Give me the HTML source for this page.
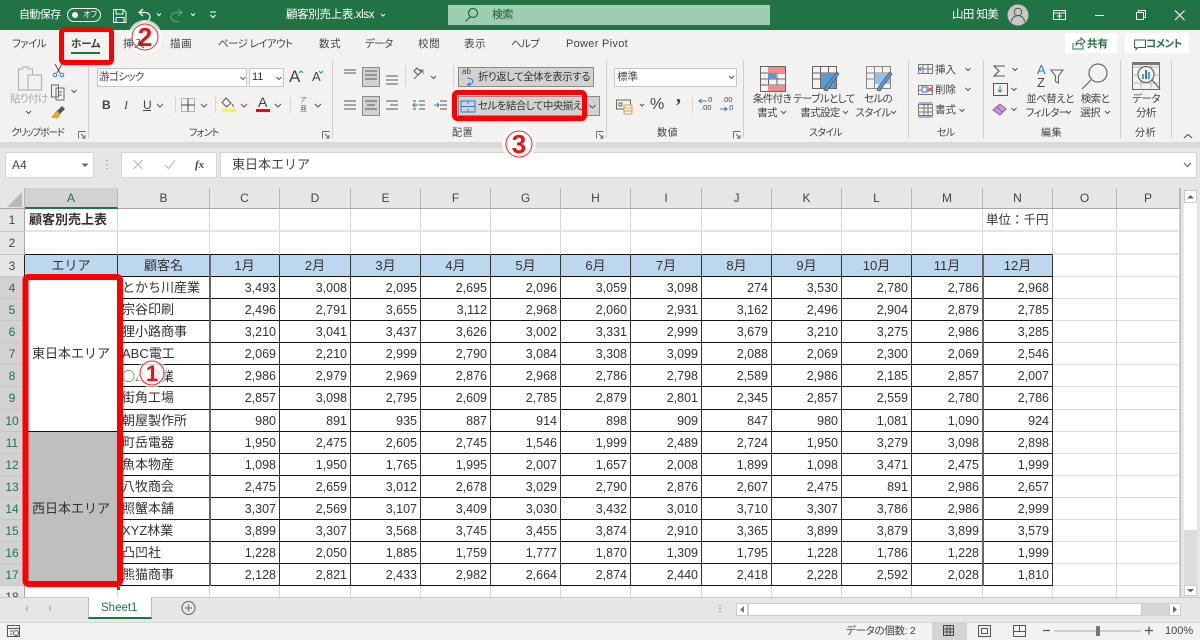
<!DOCTYPE html>
<html lang="ja"><head><meta charset="utf-8"><title>顧客別売上表</title>
<style>
*{box-sizing:border-box}
html,body{margin:0;padding:0;width:1200px;height:640px;overflow:hidden;background:#e6e6e6;font-family:"Liberation Sans","Noto Sans CJK JP",sans-serif}
.r{position:absolute}
.t{position:absolute;white-space:nowrap;font-size:10.5px;letter-spacing:-.6px;line-height:14px;color:#444;font-feature-settings:"palt";font-family:"Liberation Sans","Noto Sans CJK JP",sans-serif}
.g{font-size:10px;letter-spacing:-.8px}
.p{letter-spacing:.6px}
.w{color:#fff}.cx{transform:translateX(-50%)}
table{position:absolute;left:0;top:188px;border-collapse:separate;border-spacing:0;table-layout:fixed;width:1180px;font-size:12.5px;color:#333}
th,td{padding:0;font-weight:normal;overflow:hidden;white-space:nowrap;line-height:16px}
thead th{background:#e6e6e6;color:#444;font-size:12px;border-right:1px solid #b8b8b8;border-bottom:1px solid #a8a8a8}
tbody th{background:#e6e6e6;color:#444;font-size:12px;border-bottom:1px solid #c6c6c6;border-right:1px solid #a8a8a8}
th.s{background:#d2d2d2;color:#217346}
tbody th.n{border-right:1px solid #222}
td{background:#fff;border-right:1px solid #d6d6d6;border-bottom:1px solid #dcdcdc}
.b td{border-right:1px solid #333;border-bottom:1px solid #111;text-align:right;padding-right:3px}
.b td.l{text-align:left;padding-left:4px;padding-right:0;font-size:13px}
.b td.a{text-align:center;padding:0;font-size:13px}
.b td.x{border-right:1px solid #d6d6d6;border-bottom:1px solid #dcdcdc;padding:0}
.h td{background:#bdd7ee;text-align:center;padding:0;font-size:13px}
.h td.x{background:#fff}
.k{border-bottom:1px solid #111}
.t1 td{border-bottom:2px solid #e4e4e4}
.t2 td{border-bottom:2px solid #e4e4e4}
.t2 td.k{border-bottom:1px solid #111}
</style></head><body>

<!-- title bar -->
<div class="r" style="left:0;top:0;width:1200px;height:30px;background:#217346"></div>
<div class="r" style="left:448px;top:5px;width:322px;height:20px;background:#9fcdb3"></div>
<!-- ribbon -->
<div class="r" style="left:0;top:30px;width:1200px;height:112px;background:#f3f2f1"></div>
<div class="r" style="left:0;top:142px;width:1200px;height:6px;background:#d9d9d9"></div>
<!-- formula bar -->
<div class="r" style="left:5px;top:152px;width:89px;height:26px;background:#fff;border:1px solid #d4d4d4"></div>
<div class="r" style="left:121px;top:152px;width:96px;height:26px;background:#fff;border:1px solid #d4d4d4"></div>
<div class="r" style="left:220px;top:152px;width:977px;height:26px;background:#fff;border:1px solid #d4d4d4"></div>

<!-- ribbon boxes -->
<div class="r" style="left:97px;top:68px;width:150px;height:19px;background:#fff;border:1px solid #c8c6c4"></div>
<div class="r" style="left:249px;top:68px;width:35px;height:19px;background:#fff;border:1px solid #c8c6c4"></div>
<div class="r" style="left:614px;top:68px;width:123px;height:19px;background:#fff;border:1px solid #c8c6c4"></div>
<div class="r" style="left:362px;top:67px;width:18px;height:20px;background:#d2d2d2;border:1px solid #8a8a8a"></div>
<div class="r" style="left:362px;top:96px;width:18px;height:20px;background:#d2d2d2;border:1px solid #8a8a8a"></div>
<div class="r" style="left:458px;top:67px;width:136px;height:20px;background:#d2d2d2;border:1px solid #8a8a8a"></div>
<div class="r" style="left:458px;top:96px;width:142px;height:20px;background:#d2d2d2;border:1px solid #8a8a8a"></div>
<div class="r" style="left:1065px;top:33px;width:52px;height:20px;background:#fff"></div>
<div class="r" style="left:1125px;top:33px;width:64px;height:20px;background:#fff"></div>

<!-- sheet -->
<table>
<colgroup><col style="width:25px"><col style="width:93px"><col style="width:92px"><col style="width:70px"><col style="width:71px"><col style="width:70px"><col style="width:70px"><col style="width:70px"><col style="width:70px"><col style="width:71px"><col style="width:70px"><col style="width:70px"><col style="width:70px"><col style="width:71px"><col style="width:70px"><col style="width:64px"><col style="width:63px"></colgroup>
<thead><tr style="height:21px"><th></th><th class="s" style="border-bottom:2px solid #217346">A</th><th>B</th><th>C</th><th>D</th><th>E</th><th>F</th><th>G</th><th>H</th><th>I</th><th>J</th><th>K</th><th>L</th><th>M</th><th>N</th><th>O</th><th>P</th></tr></thead>
<tbody>
<tr class="t1" style="height:23px"><th>1</th><td style="font-weight:bold;font-size:13px;padding-left:4px">顧客別売上表</td><td></td><td></td><td></td><td></td><td></td><td></td><td></td><td></td><td></td><td></td><td></td><td></td><td style="font-size:12.5px;padding-left:3px">単位：千円</td><td></td><td></td></tr>
<tr class="t2" style="height:23px"><th>2</th><td class="k"></td><td class="k"></td><td class="k"></td><td class="k"></td><td class="k"></td><td class="k"></td><td class="k"></td><td class="k"></td><td class="k"></td><td class="k"></td><td class="k"></td><td class="k"></td><td class="k"></td><td class="k"></td><td></td><td></td></tr>
<tr class="b h" style="height:22px"><th class="n">3</th><td>エリア</td><td>顧客名</td><td>1月</td><td>2月</td><td>3月</td><td>4月</td><td>5月</td><td>6月</td><td>7月</td><td>8月</td><td>9月</td><td>10月</td><td>11月</td><td>12月</td><td class="x"></td><td class="x"></td></tr>
<tr class="b" style="height:22px"><th class="s n">4</th><td class="a" rowspan="7">東日本エリア</td><td class="l">とかち川産業</td><td>3,493</td><td>3,008</td><td>2,095</td><td>2,695</td><td>2,096</td><td>3,059</td><td>3,098</td><td>274</td><td>3,530</td><td>2,780</td><td>2,786</td><td>2,968</td><td class="x"></td><td class="x"></td></tr>
<tr class="b" style="height:22px"><th class="s n">5</th><td class="l">宗谷印刷</td><td>2,496</td><td>2,791</td><td>3,655</td><td>3,112</td><td>2,968</td><td>2,060</td><td>2,931</td><td>3,162</td><td>2,496</td><td>2,904</td><td>2,879</td><td>2,785</td><td class="x"></td><td class="x"></td></tr>
<tr class="b" style="height:22px"><th class="s n">6</th><td class="l">狸小路商事</td><td>3,210</td><td>3,041</td><td>3,437</td><td>3,626</td><td>3,002</td><td>3,331</td><td>2,999</td><td>3,679</td><td>3,210</td><td>3,275</td><td>2,986</td><td>3,285</td><td class="x"></td><td class="x"></td></tr>
<tr class="b" style="height:22px"><th class="s n">7</th><td class="l">ABC電工</td><td>2,069</td><td>2,210</td><td>2,999</td><td>2,790</td><td>3,084</td><td>3,308</td><td>3,099</td><td>2,088</td><td>2,069</td><td>2,300</td><td>2,069</td><td>2,546</td><td class="x"></td><td class="x"></td></tr>
<tr class="b" style="height:22px"><th class="s n">8</th><td class="l" style="font-family:'Noto Sans CJK JP',sans-serif">○△興業</td><td>2,986</td><td>2,979</td><td>2,969</td><td>2,876</td><td>2,968</td><td>2,786</td><td>2,798</td><td>2,589</td><td>2,986</td><td>2,185</td><td>2,857</td><td>2,007</td><td class="x"></td><td class="x"></td></tr>
<tr class="b" style="height:23px"><th class="s n">9</th><td class="l">街角工場</td><td>2,857</td><td>3,098</td><td>2,795</td><td>2,609</td><td>2,785</td><td>2,879</td><td>2,801</td><td>2,345</td><td>2,857</td><td>2,559</td><td>2,780</td><td>2,786</td><td class="x"></td><td class="x"></td></tr>
<tr class="b" style="height:22px"><th class="s n">10</th><td class="l">朝屋製作所</td><td>980</td><td>891</td><td>935</td><td>887</td><td>914</td><td>898</td><td>909</td><td>847</td><td>980</td><td>1,081</td><td>1,090</td><td>924</td><td class="x"></td><td class="x"></td></tr>
<tr class="b" style="height:22px"><th class="s n">11</th><td class="a" rowspan="7" style="background:#bfbfbf">西日本エリア</td><td class="l">町岳電器</td><td>1,950</td><td>2,475</td><td>2,605</td><td>2,745</td><td>1,546</td><td>1,999</td><td>2,489</td><td>2,724</td><td>1,950</td><td>3,279</td><td>3,098</td><td>2,898</td><td class="x"></td><td class="x"></td></tr>
<tr class="b" style="height:22px"><th class="s n">12</th><td class="l">魚本物産</td><td>1,098</td><td>1,950</td><td>1,765</td><td>1,995</td><td>2,007</td><td>1,657</td><td>2,008</td><td>1,899</td><td>1,098</td><td>3,471</td><td>2,475</td><td>1,999</td><td class="x"></td><td class="x"></td></tr>
<tr class="b" style="height:22px"><th class="s n">13</th><td class="l">八牧商会</td><td>2,475</td><td>2,659</td><td>3,012</td><td>2,678</td><td>3,029</td><td>2,790</td><td>2,876</td><td>2,607</td><td>2,475</td><td>891</td><td>2,986</td><td>2,657</td><td class="x"></td><td class="x"></td></tr>
<tr class="b" style="height:22px"><th class="s n">14</th><td class="l">照蟹本舗</td><td>3,307</td><td>2,569</td><td>3,107</td><td>3,409</td><td>3,030</td><td>3,432</td><td>3,010</td><td>3,710</td><td>3,307</td><td>3,786</td><td>2,986</td><td>2,999</td><td class="x"></td><td class="x"></td></tr>
<tr class="b" style="height:22px"><th class="s n">15</th><td class="l">XYZ林業</td><td>3,899</td><td>3,307</td><td>3,568</td><td>3,745</td><td>3,455</td><td>3,874</td><td>2,910</td><td>3,365</td><td>3,899</td><td>3,879</td><td>3,899</td><td>3,579</td><td class="x"></td><td class="x"></td></tr>
<tr class="b" style="height:22px"><th class="s n">16</th><td class="l">凸凹社</td><td>1,228</td><td>2,050</td><td>1,885</td><td>1,759</td><td>1,777</td><td>1,870</td><td>1,309</td><td>1,795</td><td>1,228</td><td>1,786</td><td>1,228</td><td>1,999</td><td class="x"></td><td class="x"></td></tr>
<tr class="b" style="height:22px"><th class="s n">17</th><td class="l">熊猫商事</td><td>2,128</td><td>2,821</td><td>2,433</td><td>2,982</td><td>2,664</td><td>2,874</td><td>2,440</td><td>2,418</td><td>2,228</td><td>2,592</td><td>2,028</td><td>1,810</td><td class="x"></td><td class="x"></td></tr>
<tr style="height:22px"><th>18</th><td></td><td></td><td></td><td></td><td></td><td></td><td></td><td></td><td></td><td></td><td></td><td></td><td></td><td></td><td></td><td></td></tr>
</tbody></table>

<!-- sheet right side / scrollbars -->
<div class="r" style="left:1180px;top:188px;width:20px;height:409px;background:#e6e6e6;border-left:1px solid #bbb"></div>
<div class="r" style="left:1184px;top:203px;width:13px;height:382px;background:#fff"></div>
<div class="r" style="left:1184px;top:190px;width:13px;height:13px;background:#fff;border:1px solid #ccc"></div>
<div class="r" style="left:1184px;top:530px;width:13px;height:55px;background:#dcdcdc"></div>
<div class="r" style="left:1184px;top:585px;width:13px;height:11px;background:#fff;border:1px solid #ccc"></div>

<!-- tab bar + status bar -->
<div class="r" style="left:0;top:597px;width:1200px;height:25px;background:#e6e6e6;border-top:1px solid #c8c8c8"></div>
<div class="r" style="left:88px;top:597px;width:64px;height:22px;background:#fff;border-left:1px solid #bbb;border-right:1px solid #bbb;border-bottom:2px solid #217346"></div>
<div class="r" style="left:748px;top:603px;width:394px;height:13px;background:#fff;border:1px solid #ccc"></div>
<div class="r" style="left:1142px;top:603px;width:27px;height:13px;background:#d6d6d6"></div>
<div class="r" style="left:1169px;top:603px;width:12px;height:13px;background:#fff;border:1px solid #ccc"></div>
<div class="r" style="left:736px;top:603px;width:12px;height:13px;background:#fff;border:1px solid #ccc"></div>
<div class="r" style="left:0;top:622px;width:1200px;height:18px;background:#f3f2f1;border-top:1px solid #d8d8d8"></div>
<div class="r" style="left:932px;top:622px;width:35px;height:18px;background:#d4d4d4"></div>

<!-- all icons, page coordinates -->
<svg class="r" style="left:0;top:0" width="1200" height="640" viewBox="0 0 1200 640" fill="none">
<!-- heavier column rules -->
<rect x="209" y="255" width="2" height="331" fill="#666"/><rect x="982" y="255" width="2" height="331" fill="#666"/>
<!-- title bar -->
<rect x="67.500" y="8.500" width="33" height="13" rx="6.500" stroke="#fff"/><circle cx="75" cy="15" r="3" fill="#fff"/>
<path d="M113.500 9.500h10l2.500 2.500v10.500h-12.500zM116 9.500v4.500h7v-4.500M116 22.500v-5h8v5" stroke="#fff"/>
<path d="M143 9l-4 3.500 4 3.500M139 12.500h6.500a4.500 4.500 0 0 1 0 9H142" stroke="#fff" stroke-width="1.200"/>
<path d="M178 9l4 3.500-4 3.500M182 12.500h-6.500a4.500 4.500 0 0 0 0 9H179" stroke="#5f9d7d" stroke-width="1.200"/>
<path d="M157 13.500l2 2 2-2M191 13.500l2 2 2-2" stroke="#fff" stroke-width="1"/>
<path d="M210 12h6M210.500 15l2.500 2.500 2.500-2.500" stroke="#fff"/>
<path d="M381 14l2 2 2-2" stroke="#fff"/>
<circle cx="473" cy="13" r="4.500" stroke="#1d6b40" stroke-width="1.200"/><path d="M470 17l-4.500 4.500" stroke="#1d6b40" stroke-width="1.200"/>
<circle cx="1018" cy="15" r="10.500" fill="#c9c7c5"/><circle cx="1018" cy="12" r="3.800" stroke="#555"/><path d="M1011.500 22a6.500 6.500 0 0 1 13 0" stroke="#555"/>
<path d="M1053.500 10.500h12v9h-12zM1053.500 13h12M1059.500 13v6.500M1057 16h5" stroke="#fff"/>
<path d="M1095 15.500h9" stroke="#fff"/>
<path d="M1136.500 12.500h7v7h-7zM1138.500 12.500v-2h7v7h-2" stroke="#fff"/>
<path d="M1175 10.500l9.500 9.500M1184.500 10.500l-9.500 9.500" stroke="#fff" stroke-width="1.100"/>
<!-- share / comment -->
<path d="M1073 43v6h10v-4M1076 45c0-3 2-5 5-5v-2l4 3.500-4 3.500v-2c-2 0-4 .5-5 2z" stroke="#217346"/>
<path d="M1134.500 40h11v7.500h-7.500l-2 2v-2h-1.500z" stroke="#217346"/>
<!-- ホーム underline -->
<rect x="71" y="52" width="29" height="2" fill="#217346"/>
<!-- group separators -->
<path d="M88.500 60v78M332.500 60v78M606.500 60v78M743.500 60v78M908.500 60v78M983.500 60v78M1120.500 60v78M1171.500 60v78" stroke="#d2d0ce"/>
<path d="M405.500 65v22M453.500 65v22M175.500 97v16M215.500 97v16M290.500 97v16M692.500 97v16" stroke="#d8d6d4"/>
<!-- clipboard -->
<path d="M18.500 69h4v-2h6v2h4v21h-14z" stroke="#b5b5b5" stroke-width="1.200" fill="#f3f2f1"/><rect x="28" y="75" width="13.500" height="15" fill="#f3f2f1" stroke="#b5b5b5" stroke-width="1.200"/>
<path d="M55 64l5 9M62 64l-5 9" stroke="#555"/><circle cx="55" cy="75" r="1.800" stroke="#2b7cd3"/><circle cx="62" cy="75" r="1.800" stroke="#2b7cd3"/>
<path d="M51.500 85h7v12h-7zM56 88h8v12h-8zM58 92h4M58 95h4" stroke="#666" fill="#f3f2f1"/>
<path d="M62 106l3 3-5 5-3-3z" fill="#555"/><path d="M57 111l3 3-3 4-5-1z" fill="#f5a623" stroke="#c47b12" stroke-width=".6"/>
<!-- font -->
<path d="M240.500 77l2.500 2.500 2.500-2.500M276.500 77l2.500 2.500 2.500-2.500M157 104l3 3 3-3M201 104l3 3 3-3M241 104l3 3 3-3M275 104l3 3 3-3M315 104l3 3 3-3M71.500 90l2.500 2.500 2.500-2.500M26 111l2.500 2.500 2.500-2.500" stroke="#555"/>
<path d="M299 73l2-2 2 2" stroke="#2b7cd3"/><path d="M319 71l2 2 2-2" stroke="#2b7cd3"/>
<path d="M181.500 98.500h13v13h-13z" stroke="#777" stroke-dasharray="1 1"/><path d="M188 98.500v13M181.500 105h13" stroke="#444"/>
<path d="M226 98l5 5-4.500 4-4.500-4.500zM232 104c1 1.500 1.500 2.500 1.500 3" stroke="#555" fill="#f3f2f1"/><rect x="222" y="109" width="14" height="3" fill="#ffff00"/>
<rect x="256" y="109" width="14" height="3" fill="#ff0000"/>
<!-- alignment -->
<path d="M344 70h12M344 73h12M365 71h12M365 75h12M365 79h12M386 76h12M386 80h12M386 84h12M344 101h12M344 105h12M344 109h12M365 101h12M367 105h8M365 109h12M386 101h12M390 105h8M386 109h12" stroke="#555"/>
<path d="M414 79l9-9M423 70v4M423 70h-4" stroke="#2b7cd3"/><path d="M414 71l3-3 4 4-3 3z" stroke="#555"/>
<path d="M431 76l2.500 2.500 2.500-2.500M589.500 105l3 3 3-3M640 104l2 2 2-2" stroke="#555"/>
<path d="M413 101h3M413 109h3M419 101h6M419 105h6M419 109h6" stroke="#555"/><path d="M418 105h-5M415 103l-2 2 2 2" stroke="#2b7cd3"/>
<path d="M440 101h7M440 105h7M440 109h7" stroke="#555"/><path d="M434 105h5M437 103l2 2-2 2" stroke="#2b7cd3"/>
<path d="M461 101h14v11h-14zM461 106.500h14M468 101v3M468 109v3" stroke="#2b7cd3"/>
<path d="M467 78c4 0 6 2 6 3.500s-2 3-5 3M470 82.500l-2.500 2 2.500 2" stroke="#2b7cd3"/>
<!-- number -->
<path d="M729 76l2.500 2.500 2.500-2.500" stroke="#555"/>
<path d="M616.500 100h14v9h-14z" stroke="#666"/><path d="M619 103h3v3h-3z" stroke="#666"/><rect x="624" y="105" width="8" height="9" rx="1.500" fill="#fff" stroke="#e8962d"/><path d="M624 108h8M624 111h8" stroke="#e8962d"/>
<path d="M699 101h7M701.500 99l-2.500 2 2.500 2" stroke="#2b7cd3"/><path d="M720 109h7M724.500 107l2.500 2-2.500 2" stroke="#2b7cd3"/>
<!-- conditional format -->
<path d="M760.500 66.500h25v25h-25zM760.500 73h25M760.500 79h25M760.500 85h25M768.500 66.500v25M777 66.500v25" stroke="#666"/>
<rect x="768" y="67" width="9" height="6" fill="#f28b8b"/><rect x="777" y="67" width="8" height="6" fill="#f28b8b"/><rect x="768" y="73" width="8" height="6" fill="#5b9bd5"/><rect x="768" y="85" width="17" height="6" fill="#f28b8b"/>
<path d="M812.500 66.500h24v22h-24zM812.500 73h24M812.500 79h24M820.500 66.500v22M828.500 66.500v22" stroke="#666"/>
<rect x="821" y="73" width="15" height="15" fill="#5b9bd5"/>
<path d="M839 74l-9 12-3 5-3-1 2-4 11-14z" fill="#5b9bd5" stroke="#555" stroke-width=".8"/>
<path d="M866.500 66.500h24v22h-24zM866.500 73h24M866.500 79h24M874.500 66.500v22M882.500 66.500v22" stroke="#888"/>
<rect x="875" y="73" width="15" height="11" fill="#8fc1ee"/>
<path d="M892 74l-9 12-3 5-3-1 2-4 11-14z" fill="#5b9bd5" stroke="#555" stroke-width=".8"/>
<path d="M781 111l2.500 2.500 2.500-2.500M843 111l2.500 2.500 2.500-2.500M891 111l2.500 2.500 2.500-2.500M965.500 68l2.500 2.500 2.500-2.500M965.500 88l2.500 2.500 2.500-2.500M959.500 109l2.500 2.500 2.500-2.500M1012.500 68l2.500 2.500 2.500-2.500M1011.500 88l2.500 2.500 2.500-2.500M1011.500 108l2.500 2.500 2.500-2.500M1066 111l2.500 2.500 2.500-2.500M1105 111l2.500 2.500 2.500-2.500" stroke="#555"/>
<!-- cells -->
<path d="M918.500 64.500h14v9h-14zM918.500 69h14M923 64.500v9M928 64.500v9" stroke="#777"/><path d="M926 69h-7M921 67l-2 2 2 2" stroke="#2b7cd3"/>
<path d="M918.500 85.500h14v9h-14zM918.500 90h14" stroke="#777"/><rect x="922" y="87" width="5" height="5" fill="#f3f2f1" stroke="#2b7cd3"/><path d="M928 87.500l4 4M932 87.500l-4 4" stroke="#e23b3b"/>
<path d="M918.500 104.500h14v11h-14zM918.500 108h14M918.500 112h14M924 104.500v11M928 104.500v11" stroke="#777"/><path d="M918.500 103h14M918.500 117h14" stroke="#2b7cd3"/>
<!-- editing -->
<path d="M1005 66h-11l5 5-5 5h11" stroke="#555" stroke-width="1.100"/>
<path d="M993.500 83.500h14v12h-14z" stroke="#555"/><path d="M1000 86v6M998 90l2 2 2-2" stroke="#2b7cd3"/>
<path d="M993 110l7-6 6 5-6 6z" fill="#c89ad6" stroke="#8b5aa3"/><path d="M996.500 107l6 5" stroke="#8b5aa3"/>
<path d="M1051 70h12l-4.500 6v7l-3-1.500v-5.500z" stroke="#666" stroke-width="1.100"/>
<circle cx="1098" cy="73" r="9" stroke="#666" stroke-width="1.200"/><path d="M1091 80l-9 9" stroke="#666" stroke-width="1.200"/>
<!-- analysis -->
<rect x="1132.500" y="62.500" width="27" height="27" stroke="#666"/><path d="M1132.500 67h27M1132.500 75h27M1132.500 83h27M1141 62.500v27M1151 62.500v27" stroke="#bbb"/>
<rect x="1132" y="62" width="28" height="3" fill="#777"/>
<circle cx="1146" cy="74.500" r="8" fill="#f3f2f1" stroke="#666" stroke-width="1.200"/><path d="M1152 80l8 9" stroke="#666" stroke-width="1.300"/>
<rect x="1142" y="74" width="2" height="5" fill="#5b9bd5"/><rect x="1145" y="70" width="2" height="9" fill="#2b7cd3"/><rect x="1148" y="72" width="2" height="7" fill="#5b9bd5"/>
<path d="M1184 138l4-3.500 4 3.500" stroke="#444"/>
<!-- launchers -->
<path d="M78.500 131.500h7M78.500 131.500v7M81 134l4 4M85 135v3h-3M322.500 131.500h7M322.500 131.500v7M325 134l4 4M329 135v3h-3M596.500 131.500h7M596.500 131.500v7M599 134l4 4M603 135v3h-3M733.500 131.500h7M733.500 131.500v7M736 134l4 4M740 135v3h-3" stroke="#666" stroke-width=".9"/>
<!-- formula bar -->
<path d="M81.500 163.500h7l-3.500 3.500z" fill="#666"/>
<path d="M107 160v1M107 164v1M107 168v1" stroke="#999" stroke-width="1.500"/>
<path d="M133.500 160l9 9M142.500 160l-9 9" stroke="#c2c2c2" stroke-width="1.300"/>
<path d="M165 165l3.500 3.500 6.500-8" stroke="#c2c2c2" stroke-width="1.300"/>
<path d="M1184 163l3.500 3.500 3.500-3.500" stroke="#666" stroke-width="1.200"/>
<!-- corner triangle -->
<path d="M22 192v15h-15z" fill="#b8b8b8"/>
<path d="M1187 198.500l3.500-3.500 3.500 3.500zM1187 589l3.500 3.500 3.500-3.500z" fill="#666"/>
<!-- selection handle -->
<rect x="117" y="587" width="3" height="3" fill="#217346"/>
<!-- tab bar icons -->
<path d="M28 605l-3 3.500 3 3.500zM49 605l3 3.500-3 3.500z" fill="#c0c0c0"/>
<circle cx="188.500" cy="608" r="6.500" stroke="#777" stroke-width="1.200"/><path d="M185 608h7M188.500 604.500v7" stroke="#777" stroke-width="1.200"/>
<path d="M720 605v1M720 608v1M720 611v1" stroke="#999" stroke-width="1.500"/>
<path d="M744 606l-4 3.500 4 3.500z" fill="#777"/><path d="M1173 606l4 3.500-4 3.500z" fill="#666"/>
<!-- status bar -->
<path d="M7.500 625.500h12v11h-12zM7.500 628.500h12M10 631h3M10 634h2" stroke="#555"/><circle cx="16" cy="633" r="2.500" fill="#f3f2f1" stroke="#555"/>
<path d="M943.500 625.500h10v10h-10zM943.500 629h10M943.500 632h10M947 625.500v10M950 625.500v10" stroke="#444"/>
<path d="M978.500 625.500h12v11h-12zM981.500 628.500h6v5h-6z" stroke="#555"/>
<path d="M1013.500 625.500h12v11h-12zM1019.500 625.500v6h-6M1019.500 631.500h6" stroke="#555"/>
<path d="M1043 630.500h7M1145 630.500h8M1149 626.500v8" stroke="#555" stroke-width="1.200"/>
<path d="M1054 631h87" stroke="#aaa"/><rect x="1096" y="626" width="4" height="10" fill="#777"/>
<!-- annotation frames -->
<rect x="61.500" y="29.500" width="50" height="33" rx="3" stroke="#ff0000" stroke-width="5"/>
<rect x="454.500" y="92.500" width="130" height="26" rx="3" stroke="#ff0000" stroke-width="5"/>
<rect x="25.500" y="277" width="94.500" height="307" rx="3" stroke="#ff0000" stroke-width="6"/>
<!-- numbered badges -->
<circle cx="145" cy="37" r="17" fill="#fff" opacity=".75"/><circle cx="145" cy="37" r="14.500" fill="#fff" opacity=".9"/><circle cx="145" cy="37" r="13" stroke="#ff2020" stroke-width="1" fill="#fff"/>
<circle cx="152" cy="373" r="15" fill="#fff" opacity=".6"/><circle cx="152" cy="373" r="12" stroke="#ff2020" fill="#fff" fill-opacity=".55"/>
<circle cx="519" cy="144" r="17" fill="#fff" opacity=".75"/><circle cx="519" cy="144" r="13" stroke="#ff2020" fill="#fff"/>
<text x="145" y="46" text-anchor="middle" font-family="Liberation Sans" font-weight="bold" font-size="26" fill="#f01010">2</text>
<text x="152" y="381" text-anchor="middle" font-family="Liberation Sans" font-weight="bold" font-size="22" fill="#f01010">1</text>
<text x="519" y="153" text-anchor="middle" font-family="Liberation Sans" font-weight="bold" font-size="26" fill="#f01010">3</text>
</svg>

<!-- title text -->
<span class="t w" style="left:19px;top:8px;font-size:11px">自動保存</span>
<span class="t w" style="left:83px;top:9px;font-size:8px;line-height:12px;letter-spacing:0">オフ</span>
<span class="t w" style="left:286px;top:8px;font-size:11.5px;letter-spacing:-.35px">顧客別売上表.xlsx</span>
<span class="t" style="left:492px;top:8px;color:#1d5c3a;font-size:11px">検索</span>
<span class="t w" style="left:952px;top:8px;font-size:11.5px">山田 知美</span>
<!-- tabs -->
<span class="t" style="left:12px;top:37px">ファイル</span>
<span class="t" style="left:71px;top:37px;font-weight:bold;color:#2d4a3a;letter-spacing:-.2px">ホーム</span>
<span class="t p" style="left:123px;top:37px">挿入</span>
<span class="t p" style="left:170px;top:37px">描画</span>
<span class="t" style="left:218px;top:37px">ページ レイアウト</span>
<span class="t p" style="left:319px;top:37px">数式</span>
<span class="t" style="left:365px;top:37px">データ</span>
<span class="t p" style="left:418px;top:37px">校閲</span>
<span class="t p" style="left:464px;top:37px">表示</span>
<span class="t" style="left:511px;top:37px">ヘルプ</span>
<span class="t" style="left:566px;top:37px;font-size:11px;letter-spacing:.3px">Power Pivot</span>
<span class="t" style="left:1087px;top:37px;font-weight:bold;color:#217346;letter-spacing:0">共有</span>
<span class="t" style="left:1146px;top:37px;font-weight:bold;color:#217346">コメント</span>
<!-- clipboard -->
<span class="t" style="left:10px;top:92px;color:#a8a8a8">貼り付け</span>
<span class="t g" style="left:11px;top:127px;letter-spacing:-1.3px">クリップボード</span>
<!-- font -->
<span class="t" style="left:99px;top:70px">游ゴシック</span>
<span class="t" style="left:252px;top:70px;font-size:11px;color:#333;letter-spacing:0">11</span>
<span class="t" style="left:289px;top:68px;font-size:17px;line-height:18px">A</span>
<span class="t" style="left:312px;top:70px;font-size:13px">A</span>
<span class="t" style="left:102px;top:98px;font-weight:bold;font-size:12px">B</span>
<span class="t" style="left:124px;top:98px;font-style:italic;font-size:12px;font-family:'Liberation Serif',serif">I</span>
<span class="t" style="left:143px;top:98px;font-size:12px;text-decoration:underline">U</span>
<span class="t" style="left:258px;top:95px;font-size:14px">A</span>
<span class="t" style="left:300px;top:96px;font-size:7px;line-height:9px;color:#666;letter-spacing:0">ア<br>亜</span>
<span class="t g" style="left:189px;top:127px">フォント</span>
<!-- alignment -->
<span class="t" style="left:462px;top:67px;font-size:8px;line-height:10px;letter-spacing:0">ab</span>
<span class="t" style="left:478px;top:70px;color:#333;letter-spacing:-.55px">折り返して全体を表示する</span>
<span class="t" style="left:478px;top:99px;color:#333;letter-spacing:-.55px">セルを結合して中央揃え</span>
<span class="t p" style="left:452px;top:127px;font-size:10px">配置</span>
<!-- number -->
<span class="t" style="left:617px;top:70px;letter-spacing:0">標準</span>
<span class="t" style="left:650px;top:96px;font-size:16px;line-height:18px">%</span>
<span class="t" style="left:676px;top:87px;font-size:20px;line-height:18px;font-weight:bold;font-family:'Liberation Serif',serif">,</span>
<span class="t" style="left:706px;top:96px;font-size:7.5px;line-height:8px;letter-spacing:0">.0</span>
<span class="t" style="left:701px;top:104px;font-size:7.5px;line-height:8px;letter-spacing:0">.00</span>
<span class="t" style="left:722px;top:96px;font-size:7.5px;line-height:8px;letter-spacing:0">.00</span>
<span class="t" style="left:727px;top:104px;font-size:7.5px;line-height:8px;letter-spacing:0">.0</span>
<span class="t p" style="left:657px;top:127px;font-size:10px">数値</span>
<!-- styles -->
<span class="t cx" style="left:772px;top:92px">条件付き</span>
<span class="t cx" style="left:767px;top:106px">書式</span>
<span class="t cx" style="left:824px;top:92px">テーブルとして</span>
<span class="t cx" style="left:820px;top:106px">書式設定</span>
<span class="t cx" style="left:878px;top:92px">セルの</span>
<span class="t cx" style="left:873px;top:106px">スタイル</span>
<span class="t g" style="left:809px;top:127px">スタイル</span>
<!-- cells -->
<span class="t" style="left:935px;top:63px;letter-spacing:0">挿入</span>
<span class="t" style="left:935px;top:83px;letter-spacing:0">削除</span>
<span class="t" style="left:935px;top:103px;letter-spacing:0">書式</span>
<span class="t g" style="left:937px;top:127px">セル</span>
<!-- editing -->
<span class="t" style="left:1037px;top:63px;font-size:13px;color:#2b7cd3;line-height:13px">A</span>
<span class="t" style="left:1037px;top:76px;font-size:13px;line-height:13px">Z</span>
<span class="t cx" style="left:1050px;top:92px">並べ替えと</span>
<span class="t cx" style="left:1047px;top:106px">フィルター</span>
<span class="t cx" style="left:1095px;top:92px">検索と</span>
<span class="t cx" style="left:1090px;top:106px">選択</span>
<span class="t p" style="left:1041px;top:127px;font-size:10px">編集</span>
<!-- analysis -->
<span class="t cx" style="left:1146px;top:92px">データ</span>
<span class="t cx" style="left:1146px;top:106px">分析</span>
<span class="t p" style="left:1135px;top:127px;font-size:10px">分析</span>
<!-- formula text -->
<span class="t" style="left:12px;top:158px;font-size:12px;letter-spacing:0">A4</span>
<span class="t" style="left:195px;top:158px;font-size:11px;font-style:italic;font-weight:bold;font-family:'Liberation Serif',serif;letter-spacing:0">fx</span>
<span class="t" style="left:232px;top:157px;font-size:13px;line-height:15px;font-feature-settings:normal;letter-spacing:0">東日本エリア</span>
<!-- tab/status text -->
<span class="t" style="left:101px;top:601px;font-size:11.5px;color:#217346;letter-spacing:0">Sheet1</span>
<span class="t" style="left:846px;top:624px;letter-spacing:-.3px">データの個数: 2</span>
<span class="t" style="left:1165px;top:624px;font-size:11px;letter-spacing:0">100%</span>
</body></html>
